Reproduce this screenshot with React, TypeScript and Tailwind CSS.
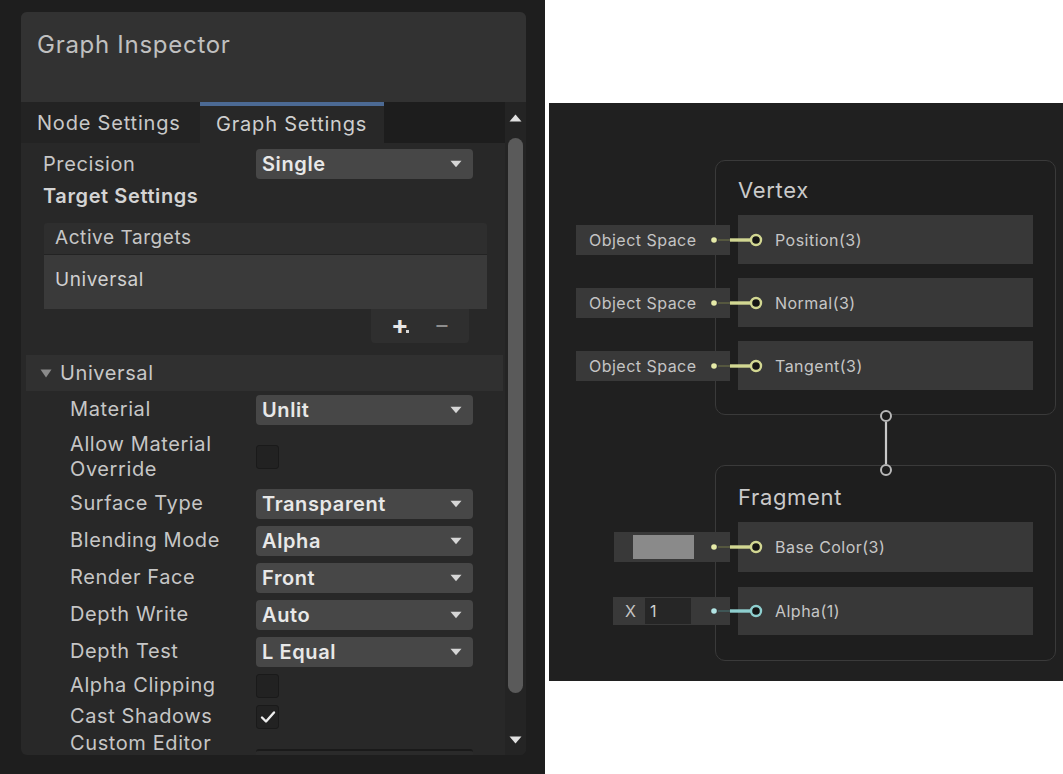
import React from "react";

function Arrow() {
  return (
    <svg width="12" height="8" viewBox="0 0 12 8">
      <path d="M0.5 0.8h11L6 7.2z" fill="#d6d6d6" />
    </svg>
  );
}

function Dropdown({ value }: { value: string }) {
  return (
    <div className="w-[217px] h-[30px] rounded-[4px] bg-[#474747] flex items-center justify-between pl-[6px] pr-[11px]">
      <span className="text-[20px] leading-[24px] font-semibold text-[#e8e8e8] tracking-[0.03em]">{value}</span>
      <Arrow />
    </div>
  );
}

function Checkbox({ checked }: { checked?: boolean }) {
  return (
    <div className="w-[23px] h-[24px] rounded-[3px] bg-[#222222] border border-[#1a1a1a] flex items-center justify-center">
      {checked && (
        <svg width="16" height="14" viewBox="0 0 16 14">
          <path d="M2 7.5l4 4 8-9" stroke="#eeeeee" strokeWidth="2.4" fill="none" strokeLinecap="round" strokeLinejoin="round" />
        </svg>
      )}
    </div>
  );
}

function Row({ label, children, h }: { label: React.ReactNode; children?: React.ReactNode; h: string }) {
  return (
    <div className={`flex items-center pl-[49px] ${h}`}>
      <div className="w-[186px] text-[20px] leading-[25px] text-[#c6c6c6] tracking-[0.03em]">{label}</div>
      {children}
    </div>
  );
}

function Panel() {
  return (
    <div className="w-[505px] h-[743px] rounded-[6px] bg-[#282828] flex flex-col overflow-hidden">
      <div className="h-[90px] shrink-0 bg-[#323232] pl-[16px] pt-[18px]">
        <span className="text-[24px] leading-[30px] text-[#c0c0c0] tracking-[0.03em]">Graph Inspector</span>
      </div>
      <div className="flex flex-1 min-h-0">
        <div className="w-[484px] flex flex-col overflow-hidden">
          {/* Tabs */}
          <div className="h-[41px] shrink-0 flex bg-[#1d1d1d]">
            <div className="w-[179px] bg-[#232323] flex items-center pl-[16px]">
              <span className="text-[20px] text-[#c8c8c8] tracking-[0.04em]">Node Settings</span>
            </div>
            <div className="w-[184px] bg-[#282828] border-t-[4px] border-[#4c6a94] flex items-center pl-[16px] pb-[2px]">
              <span className="text-[20px] text-[#cfcfcf] tracking-[0.04em]">Graph Settings</span>
            </div>
          </div>
          {/* Precision */}
          <div className="mt-[6px] h-[30px] shrink-0 flex items-center pl-[22px]">
            <div className="w-[213px] text-[20px] text-[#c6c6c6] tracking-[0.03em]">Precision</div>
            <Dropdown value="Single" />
          </div>
          <div className="mt-[5px] h-[24px] shrink-0 pl-[22px] text-[20px] leading-[24px] font-semibold text-[#d4d4d4] tracking-[0.03em]">
            Target Settings
          </div>
          {/* List */}
          <div className="mt-[15px] ml-[23px] w-[443px] shrink-0 flex flex-col">
            <div className="h-[32px] bg-[#2e2e2e] rounded-t-[3px] flex items-center pl-[11px] border-b border-[#232323]">
              <span className="text-[19px] text-[#c6c6c6] tracking-[0.03em]">Active Targets</span>
            </div>
            <div className="h-[54px] bg-[#3a3a3a] pl-[11px] pt-[13px]">
              <span className="text-[19px] leading-[24px] text-[#d0d0d0] tracking-[0.03em]">Universal</span>
            </div>
            <div className="flex justify-end pr-[18px]">
              <div className="w-[98px] h-[34px] bg-[#2f2f2f] rounded-b-[4px] relative">
                <span className="absolute left-[20px] top-[2px] text-[26px] leading-[28px] font-bold text-[#e6e6e6]">+</span>
                <span className="absolute left-[35px] top-[21px] w-[3px] h-[3px] bg-[#d8d8d8]" />
                <span className="absolute left-[63px] top-[2px] text-[24px] leading-[28px] text-[#8e8e8e]">−</span>
              </div>
            </div>
          </div>
          {/* Foldout */}
          <div className="mt-[12px] ml-[5px] w-[477px] h-[36px] shrink-0 bg-[#303030] flex items-center pl-[14px]">
            <svg width="12" height="9" viewBox="0 0 12 9">
              <path d="M0.5 0.5h11L6 8.5z" fill="#8a8a8a" />
            </svg>
            <span className="ml-[8px] text-[20px] text-[#c8c8c8] tracking-[0.03em]">Universal</span>
          </div>
          <div className="shrink-0">
            <Row label="Material" h="h-[37px]"><Dropdown value="Unlit" /></Row>
            <Row label={<>Allow Material<br />Override</>} h="h-[57px]"><Checkbox /></Row>
            <Row label="Surface Type" h="h-[37px]"><Dropdown value="Transparent" /></Row>
            <Row label="Blending Mode" h="h-[37px]"><Dropdown value="Alpha" /></Row>
            <Row label="Render Face" h="h-[37px]"><Dropdown value="Front" /></Row>
            <Row label="Depth Write" h="h-[37px]"><Dropdown value="Auto" /></Row>
            <Row label="Depth Test" h="h-[37px]"><Dropdown value="L Equal" /></Row>
            <Row label="Alpha Clipping" h="h-[31px]"><Checkbox /></Row>
            <Row label="Cast Shadows" h="h-[31px]"><Checkbox checked /></Row>
            <div className="flex pl-[49px] h-[37px]">
              <div className="w-[186px] text-[20px] leading-[22px] text-[#c6c6c6] tracking-[0.03em]">Custom Editor</div>
              <div className="mt-[17px] w-[217px] h-[30px] rounded-[3px] bg-[#2a2a2a] border-t-2 border-[#1a1a1a]" />
            </div>
          </div>
        </div>
        {/* Scrollbar */}
        <div className="w-[21px] bg-[#242424] flex flex-col items-center">
          <svg className="mt-[12px]" width="13" height="8" viewBox="0 0 13 8">
            <path d="M6.5 0.5L12.5 7.5H0.5z" fill="#e0e0e0" />
          </svg>
          <div className="mt-[16px] w-[15px] h-[555px] rounded-full bg-[#5a5a5a]" />
          <svg className="mt-[43px]" width="13" height="8" viewBox="0 0 13 8">
            <path d="M0.5 0.5h12L6.5 7.5z" fill="#e0e0e0" />
          </svg>
        </div>
      </div>
    </div>
  );
}

type Port = "yellow" | "cyan";

function Connector({ color }: { color: Port }) {
  const c = color === "yellow"
    ? { dot: "#e6eaa8", dim: "#55573f", bright: "#d2d792" }
    : { dot: "#b2e4e4", dim: "#3f5656", bright: "#8ecfcf" };
  return (
    <svg className="absolute left-[-28px] top-1/2 -translate-y-1/2" width="56" height="16" viewBox="0 0 56 16">
      <circle cx="4" cy="8" r="2.8" fill={c.dot} />
      <line x1="8" y1="8" x2="21" y2="8" stroke={c.dim} strokeWidth="2" />
      <line x1="20" y1="8" x2="41" y2="8" stroke={c.bright} strokeWidth="3.4" />
      <circle cx="46" cy="8" r="5" stroke={c.bright} strokeWidth="2.4" fill="#151515" />
    </svg>
  );
}

function Slot({ label, h, color = "yellow", input }: { label: string; h: string; color?: Port; input: React.ReactNode }) {
  return (
    <div className={`relative ${h} bg-[#383838] flex items-center pl-[37px]`}>
      {input}
      <Connector color={color} />
      <span className="text-[16px] text-[#c6c6c6] tracking-[0.03em]">{label}</span>
    </div>
  );
}

function ObjectSpace() {
  return (
    <div className="absolute left-[-162px] top-1/2 -translate-y-1/2 w-[154px] h-[30px] bg-[#393939] flex items-center pl-[13px]">
      <span className="text-[16px] text-[#c4c4c4] tracking-[0.03em]">Object Space</span>
    </div>
  );
}

function Canvas() {
  return (
    <div className="relative w-[514px] h-[578px] bg-[#202020]">
      {/* Vertex */}
      <div className="absolute left-[166px] top-[57px] w-[341px] h-[255px] rounded-[10px] border border-[#3a3a3a] bg-[#1e1e1e] flex flex-col px-[22px] pt-[15px]">
        <div className="h-[28px] text-[22px] leading-[28px] text-[#cacaca] tracking-[0.03em]">Vertex</div>
        <div className="mt-[11px] flex flex-col gap-[14px]">
          <Slot label="Position(3)" h="h-[49px]" input={<ObjectSpace />} />
          <Slot label="Normal(3)" h="h-[49px]" input={<ObjectSpace />} />
          <Slot label="Tangent(3)" h="h-[49px]" input={<ObjectSpace />} />
        </div>
      </div>
      {/* Fragment */}
      <div className="absolute left-[166px] top-[362px] w-[341px] h-[196px] rounded-[10px] border border-[#3a3a3a] bg-[#1e1e1e] flex flex-col px-[22px] pt-[17px]">
        <div className="h-[28px] text-[22px] leading-[28px] text-[#cacaca] tracking-[0.03em]">Fragment</div>
        <div className="mt-[11px] flex flex-col gap-[15px]">
          <Slot
            label="Base Color(3)"
            h="h-[50px]"
            input={
              <div className="absolute left-[-124px] top-1/2 -translate-y-1/2 w-[116px] h-[30px] bg-[#393939] pl-[19px] pt-[3px]">
                <div className="w-[61px] h-[24px] bg-[#8a8a8a]" />
              </div>
            }
          />
          <Slot
            label="Alpha(1)"
            h="h-[48px]"
            color="cyan"
            input={
              <div className="absolute left-[-125px] top-1/2 -translate-y-1/2 w-[117px] h-[28px] bg-[#393939] flex items-center pl-[12px]">
                <span className="text-[16px] text-[#c4c4c4]">X</span>
                <div className="ml-[9px] w-[46px] h-[26px] bg-[#262626] flex items-center pl-[5px]">
                  <span className="text-[16px] text-[#d0d0d0]">1</span>
                </div>
              </div>
            }
          />
        </div>
      </div>
      {/* Flow connector */}
      <svg className="absolute left-[330px] top-[306px]" width="14" height="68" viewBox="0 0 14 68">
        <line x1="7" y1="13" x2="7" y2="55" stroke="#c8c8c8" strokeWidth="2.2" />
        <circle cx="7" cy="7" r="5" stroke="#b8b8b8" strokeWidth="2" fill="#1c1c1c" />
        <circle cx="7" cy="61" r="5" stroke="#b8b8b8" strokeWidth="2" fill="#1c1c1c" />
      </svg>
    </div>
  );
}

export default function App() {
  return (
    <div className="flex w-[1063px] h-[774px] bg-white overflow-hidden font-['Inter','Noto_Sans',sans-serif]">
      <div className="w-[545px] h-full shrink-0 bg-[#1e1e1e] pl-[21px] pt-[12px]">
        <Panel />
      </div>
      <div className="ml-[4px] w-[514px] shrink-0 pt-[103px]">
        <Canvas />
      </div>
    </div>
  );
}
